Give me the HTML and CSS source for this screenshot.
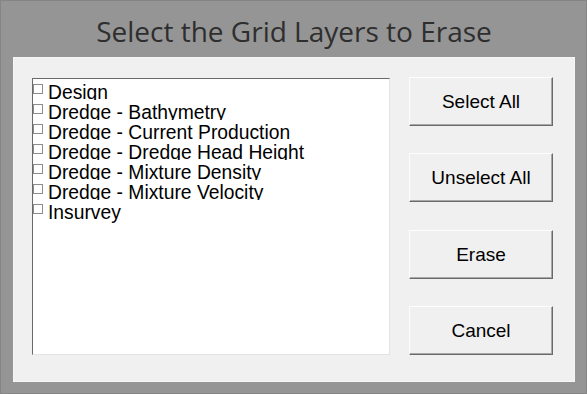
FILE: index.html
```html
<!DOCTYPE html>
<html lang="en">
<head>
<meta charset="UTF-8">
<title>Select the Grid Layers to Erase</title>
<link rel="stylesheet" href="styles.css">
</head>
<body>
<div class="dialog">
  <h1 class="title">Select the Grid Layers to Erase</h1>
  <div class="panel">
    <div class="layer-list">
      <label class="layer"><span class="check"></span>Design</label>
      <label class="layer"><span class="check"></span>Dredge - Bathymetry</label>
      <label class="layer"><span class="check"></span>Dredge - Current Production</label>
      <label class="layer"><span class="check"></span>Dredge - Dredge Head Height</label>
      <label class="layer"><span class="check"></span>Dredge - Mixture Density</label>
      <label class="layer"><span class="check"></span>Dredge - Mixture Velocity</label>
      <label class="layer"><span class="check"></span>Insurvey</label>
    </div>
    <div class="buttons">
      <button>Select All</button>
      <button>Unselect All</button>
      <button>Erase</button>
      <button>Cancel</button>
    </div>
  </div>
</div>
</body>
</html>
```

FILE: styles.css
```css
body {
  margin: 0;
  background: #959595;
}
.dialog {
  width: 587px;
  height: 394px;
  box-sizing: border-box;
  border: 1px solid #858585;
  background: #959595;
  padding: 0 11px 11px 12px;
  display: flex;
  flex-direction: column;
}
.title {
  margin: 0;
  height: 56px;
  font-family: 'Open Sans', 'Noto Sans', sans-serif;
  font-weight: normal;
  font-size: 28px;
  line-height: 60px;
  color: #2e2e2e;
  text-align: center;
  white-space: nowrap;
}
.panel {
  flex: 1;
  display: flex;
  gap: 19px;
  background: #f0f0f0;
  border: 1px solid #f6f6f6;
  padding: 20px 21px 26px 18px;
}
.layer-list {
  width: 358px;
  box-sizing: border-box;
  background: #fff;
  border: 1px solid;
  border-color: #6a6a6a #e3e3e3 #e3e3e3 #6a6a6a;
  padding-top: 1px;
  font-family: 'Liberation Sans', Arial, sans-serif;
  font-size: 19.3px;
  color: #000;
}
.layer {
  position: relative;
  display: flex;
  align-items: flex-start;
  height: 20px;
  box-sizing: border-box;
  padding-top: 5px;
  line-height: 15px;
  background: #fff;
  white-space: nowrap;
}
.check {
  width: 10px;
  height: 10px;
  box-sizing: border-box;
  border: 1px solid #8c8c8c;
  background: #fff;
  margin: -1px 5px 0 0;
  flex: none;
}
.buttons {
  flex: 1;
  display: flex;
  flex-direction: column;
  justify-content: space-between;
  margin-top: -1px;
}
button {
  height: 49px;
  box-sizing: border-box;
  background: #f0f0f0;
  border: 1px solid;
  border-color: #fdfdfd #6a6a6a #6a6a6a #fdfdfd;
  box-shadow: inset -1px -1px 0 #a8a8a8;
  font-family: 'Liberation Sans', Arial, sans-serif;
  font-size: 19px;
  color: #000;
  padding: 1px 0 0;
}
```
